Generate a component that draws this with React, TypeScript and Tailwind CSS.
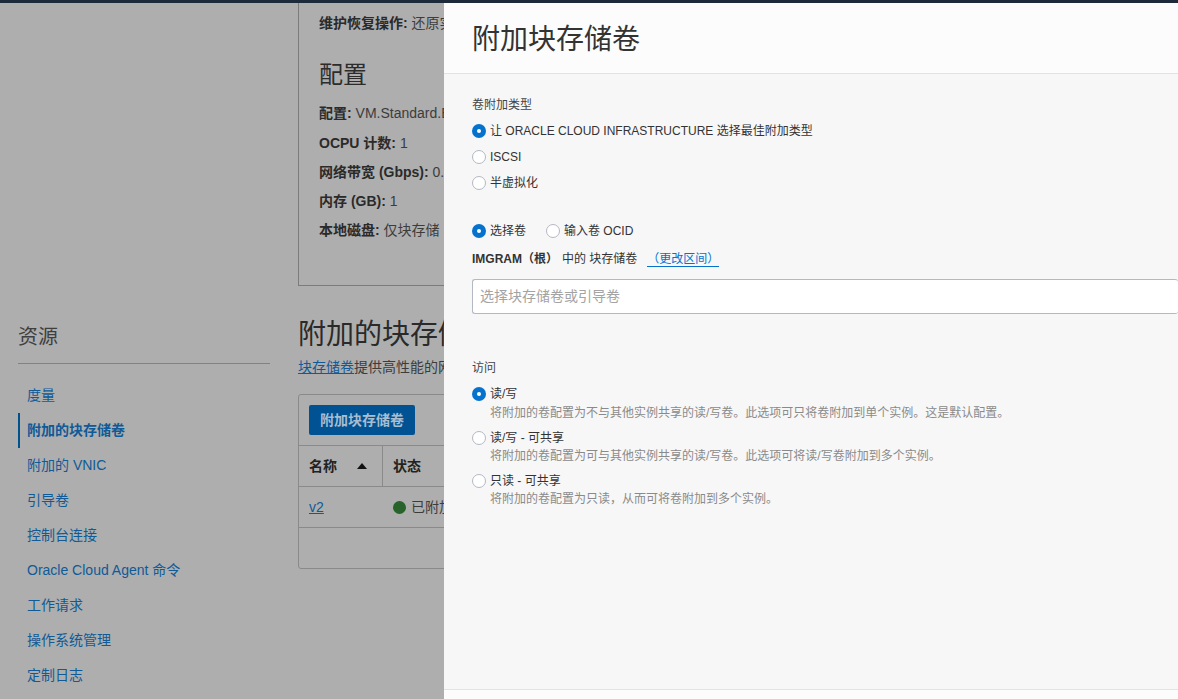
const F = "font-['Liberation_Sans','Noto_Sans_CJK_SC',sans-serif]";

function Radio({ on }: { on?: boolean }) {
  return on ? (
    <span className="flex h-[14px] w-[14px] shrink-0 items-center justify-center rounded-full bg-[#0572ce]">
      <span className="h-[4px] w-[4px] rounded-full bg-white" />
    </span>
  ) : (
    <span className="h-[14px] w-[14px] shrink-0 rounded-full border border-[#b3b8c2] bg-white" />
  );
}

function Option({ on, label }: { on?: boolean; label: string }) {
  return (
    <div className="flex h-[26px] items-center gap-[4px] text-[12px] text-[#333]">
      <Radio on={on} />
      <span>{label}</span>
    </div>
  );
}

function Access({ on, label, help }: { on?: boolean; label: string; help: string }) {
  return (
    <div className={on ? "h-[44px]" : "h-[43px]"}>
      <div className="flex h-[20px] items-center gap-[4px] text-[12px] text-[#333]">
        <Radio on={on} />
        <span>{label}</span>
      </div>
      <div className={on ? "mt-[1px] pl-[18px] text-[12px] leading-[16px] text-[#8a8a8a]" : "pl-[18px] text-[12px] leading-[16px] text-[#8a8a8a]"}>{help}</div>
    </div>
  );
}

const nav = ["度量", "附加的块存储卷", "附加的 VNIC", "引导卷", "控制台连接", "Oracle Cloud Agent 命令", "工作请求", "操作系统管理", "定制日志"];

function Kv({ k, v }: { k: string; v: string }) {
  return (
    <div className="h-[29.3px] whitespace-nowrap text-[14px] leading-[20px] text-[#3c3c3c]">
      <b className="font-bold text-[#2a2a2a]">{k}</b> {v}
    </div>
  );
}

export default function App() {
  return (
    <div className={`relative h-[699px] w-[1178px] overflow-hidden bg-[#aeaeae] ${F}`}>
      <div className="h-[3px] bg-[#1c2a3a]" />
      <div className="flex h-[696px] overflow-hidden">
        <aside className="ml-[18px] mt-[320px] w-[252px] shrink-0">
          <h2 className="h-[40px] text-[20px] leading-[28px] text-[#3f3f3f]">资源</h2>
          <div className="h-px bg-[#828282]" />
          <nav className="mt-[14px]">
            {nav.map((n, i) => (
              <div
                key={n}
                className={
                  i === 1
                    ? "flex h-[35px] items-center whitespace-nowrap border-l-2 border-[#00528f] pl-[7px] text-[14px] font-bold text-[#0f5a97]"
                    : "flex h-[35px] items-center whitespace-nowrap pl-[9px] text-[14px] text-[#0f5a97]"
                }
              >
                {n}
              </div>
            ))}
          </nav>
        </aside>
        <main className="ml-[28px] w-[146px] shrink-0 overflow-hidden">
          <section className="h-[283px] border-b border-l border-[#7c7c7c] pl-[20px] pt-[10px]">
            <Kv k="维护恢复操作:" v="还原实" />
            <h2 className="mt-[16px] h-[45px] text-[24px] leading-[34px] text-[#2c2c2c]">配置</h2>
            <Kv k="配置:" v="VM.Standard.E" />
            <Kv k="OCPU 计数:" v="1" />
            <Kv k="网络带宽 (Gbps):" v="0.4" />
            <Kv k="内存 (GB):" v="1" />
            <Kv k="本地磁盘:" v="仅块存储" />
          </section>
          <h1 className="mt-[30px] h-[38px] whitespace-nowrap text-[28px] leading-[38px] text-[#2a2a2a]">附加的块存储</h1>
          <p className="mt-[3px] h-[20px] whitespace-nowrap text-[14px] leading-[20px] text-[#3c3c3c]">
            <a className="text-[#0f5a97] underline">块存储卷</a>提供高性能的网
          </p>
          <div className="mt-[17px] h-[175px] w-[300px] rounded-[3px] border border-[#8a8a8a]">
            <div className="h-[50px] px-[10px] pt-[10px]">
              <button className="h-[30px] rounded-[2px] bg-[#005293] px-[11px] text-[14px] font-bold text-[#a9bdd0]">附加块存储卷</button>
            </div>
            <div className="flex h-[42px] items-center border-y border-[#8a8a8a] text-[14px] font-bold text-[#222]">
              <div className="flex h-full w-[84px] items-center border-r border-[#8a8a8a] pl-[10px]">
                名称
                <svg className="ml-[20px]" width="10" height="6" viewBox="0 0 10 6"><path d="M5 0 10 6H0Z" fill="#111" /></svg>
              </div>
              <div className="pl-[10px]">状态</div>
            </div>
            <div className="flex h-[41px] items-center border-b border-[#8a8a8a] text-[14px] text-[#3c3c3c]">
              <a className="w-[84px] pl-[10px] text-[#0f5a97] underline">v2</a>
              <span className="ml-[10px] h-[13px] w-[13px] rounded-full bg-[#27632a]" />
              <span className="ml-[5px] whitespace-nowrap">已附加</span>
            </div>
          </div>
        </main>
      </div>

      <div className="absolute bottom-0 left-[444px] right-0 top-[3px] flex flex-col bg-[#f7f7f7]">
        <header className="h-[71px] shrink-0 border-b border-[#e3e3e3] bg-[#fcfcfc] pl-[28px] pt-[17px] text-[28px] leading-[40px] text-[#333]">
          附加块存储卷
        </header>
        <div className="flex-1 pl-[28px] pt-[23px]">
          <div className="h-[17px] text-[12px] leading-[17px] text-[#444]">卷附加类型</div>
          <div className="mt-[4px]">
            <Option on label="让 ORACLE CLOUD INFRASTRUCTURE 选择最佳附加类型" />
            <Option label="ISCSI" />
            <Option label="半虚拟化" />
          </div>
          <div className="mt-[22px] flex gap-[20px]">
            <Option on label="选择卷" />
            <Option label="输入卷 OCID" />
          </div>
          <div className="mt-[5px] flex h-[20px] items-center whitespace-nowrap text-[12px] text-[#333]">
            <b>IMGRAM（根）</b>
            <span className="ml-[4px]">中的 块存储卷</span>
            <a className="ml-[10px] border-b border-[#0572ce] leading-[14px] text-[#0572ce]">（更改区间）</a>
          </div>
          <div className="mt-[10px] flex h-[35px] items-center rounded-[3px] border border-r-0 border-[#b3b8c2] bg-white pl-[7px] text-[14px] text-[#a3a3a3]">
            选择块存储卷或引导卷
          </div>
          <div className="mt-[46px] h-[17px] text-[12px] leading-[17px] text-[#444]">访问</div>
          <div className="mt-[7px]">
            <Access on label="读/写" help="将附加的卷配置为不与其他实例共享的读/写卷。此选项可只将卷附加到单个实例。这是默认配置。" />
            <Access label="读/写 - 可共享" help="将附加的卷配置为可与其他实例共享的读/写卷。此选项可将读/写卷附加到多个实例。" />
            <Access label="只读 - 可共享" help="将附加的卷配置为只读，从而可将卷附加到多个实例。" />
          </div>
        </div>
        <footer className="h-[10px] shrink-0 border-t border-[#e3e3e3] bg-[#fcfcfc]" />
      </div>
    </div>
  );
}
